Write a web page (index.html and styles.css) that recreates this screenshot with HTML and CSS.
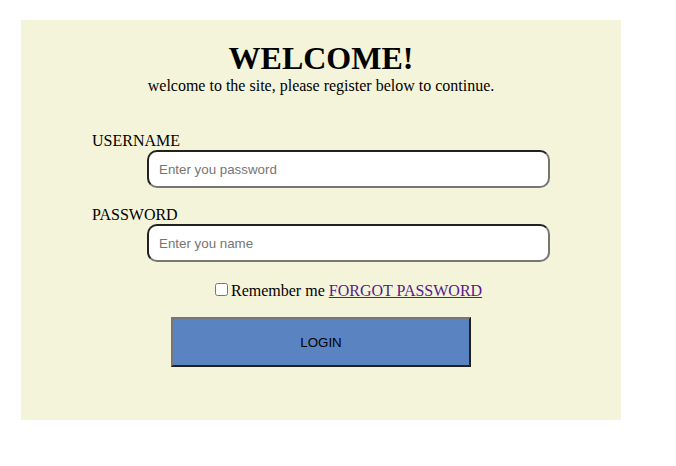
FILE: index.html
```html
<!DOCTYPE html>
<html>
<head>
<meta charset="utf-8">
<title>Welcome</title>
<link rel="stylesheet" href="styles.css">
</head>
<body>
<div class="card">
  <h1 class="title">WELCOME!</h1>
  <p class="subtitle">welcome to the site, please register below to continue.</p>
  <form class="form">
    <label class="label" for="user">USERNAME</label>
    <input class="field" id="user" type="text" placeholder="Enter you password">
    <label class="label label-gap" for="pass">PASSWORD</label>
    <input class="field" id="pass" type="text" placeholder="Enter you name">
    <div class="remember"><input class="check" type="checkbox" id="rem"><label for="rem">Remember me</label> <a class="forgot" href="#">FORGOT PASSWORD</a></div>
    <button class="login" type="button">LOGIN</button>
  </form>
</div>
</body>
</html>
```
FILE: styles.css
```css
html, body {
  margin: 0;
  padding: 0;
  background: #ffffff;
}
body {
  font-family: "Liberation Serif", "Times New Roman", serif;
  font-size: 16px;
  color: #000;
}
.card {
  box-sizing: border-box;
  margin: 20px 0 0 21px;
  width: 600px;
  height: 400px;
  padding-top: 20px;
  background: #f4f4da;
  text-align: center;
}
.title {
  margin: 0;
  font-size: 32px;
  font-weight: bold;
  line-height: normal;
}
.subtitle {
  margin: 0;
  line-height: normal;
}
.form {
  margin: 37px 0 0;
  padding: 0 71px;
  text-align: left;
}
.label {
  display: block;
  line-height: normal;
}
.label-gap {
  margin-top: 18px;
}
.field {
  display: block;
  box-sizing: border-box;
  width: 403px;
  height: 38px;
  margin: 0 0 0 55px;
  padding: 0 10px;
  border: 2px inset rgb(118, 118, 118);
  border-radius: 10px;
  background: #fff;
  font-family: "Liberation Sans", Arial, sans-serif;
  font-size: 13.333px;
  color: #000;
}
.field::placeholder {
  color: #757575;
}
.remember {
  margin-top: 18px;
  padding-left: 119px;
  line-height: normal;
}
.check {
  margin: 3px 3px 3px 4px;
  vertical-align: baseline;
}
.forgot {
  color: #551a8b;
}
.login {
  display: block;
  box-sizing: border-box;
  width: 300px;
  height: 50px;
  margin: 17px auto 0;
  border: 2px outset rgb(118, 118, 118);
  background: #5a83c2;
  font-family: "Liberation Sans", Arial, sans-serif;
  font-size: 13.333px;
  color: #000;
}
```
